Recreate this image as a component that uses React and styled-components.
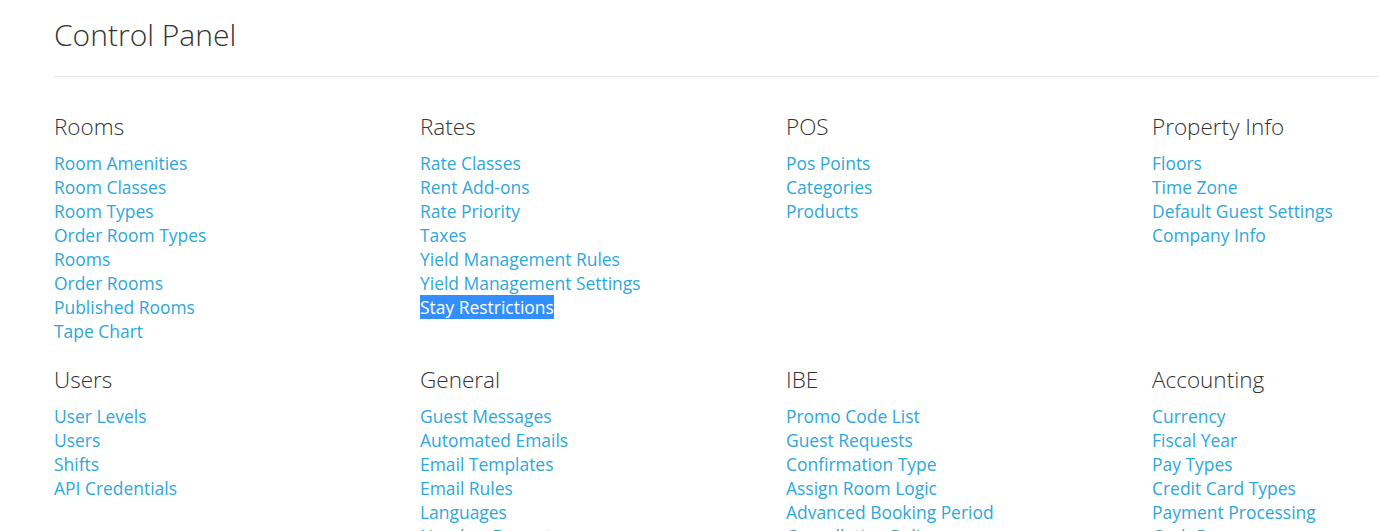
import React from 'react';
import styled, { createGlobalStyle } from 'styled-components';

const GlobalStyle = createGlobalStyle`
  html, body {
    margin: 0;
    padding: 0;
    background: #fff;
    overflow: hidden;
  }
  body {
    font-family: "Open Sans", "Noto Sans", sans-serif;
  }
`;

const Page = styled.div`
  padding: 17px 0 0 54px;
  width: 1325px;
  overflow: hidden;
`;

const Title = styled.h1`
  margin: 0;
  font-size: 30px;
  line-height: 36px;
  font-weight: 300;
  color: #333;
`;

const Rule = styled.hr`
  margin: 23px 0 0;
  border: 0;
  border-top: 1px solid #e8e8e8;
`;

const Grid = styled.div`
  display: grid;
  grid-template-columns: repeat(4, 366px);
  row-gap: 22px;
  padding-top: 35px;
`;

const Section = styled.section`
  display: flex;
  flex-direction: column;
`;

const Heading = styled.h3`
  margin: 0 0 9px;
  font-size: 22.5px;
  line-height: 30px;
  font-weight: 300;
  color: #333;
`;

const LinkList = styled.ul`
  list-style: none;
  margin: 0;
  padding: 0;
`;

const Item = styled.li`
  font-size: 17.45px;
  line-height: 24px;
  white-space: nowrap;
`;

const Link = styled.a`
  color: ${p => (p.$selected ? '#fff' : '#2ea7db')};
  background: ${p => (p.$selected ? '#338fff' : 'transparent')};
  text-decoration: none;
`;

const sections = [
  { title: 'Rooms', links: ['Room Amenities', 'Room Classes', 'Room Types', 'Order Room Types', 'Rooms', 'Order Rooms', 'Published Rooms', 'Tape Chart'] },
  { title: 'Rates', links: ['Rate Classes', 'Rent Add-ons', 'Rate Priority', 'Taxes', 'Yield Management Rules', 'Yield Management Settings', 'Stay Restrictions'], selected: 'Stay Restrictions' },
  { title: 'POS', links: ['Pos Points', 'Categories', 'Products'] },
  { title: 'Property Info', links: ['Floors', 'Time Zone', 'Default Guest Settings', 'Company Info'] },
  { title: 'Users', links: ['User Levels', 'Users', 'Shifts', 'API Credentials'] },
  { title: 'General', links: ['Guest Messages', 'Automated Emails', 'Email Templates', 'Email Rules', 'Languages', 'Number Formats'] },
  { title: 'IBE', links: ['Promo Code List', 'Guest Requests', 'Confirmation Type', 'Assign Room Logic', 'Advanced Booking Period', 'Cancellation Policy'] },
  { title: 'Accounting', links: ['Currency', 'Fiscal Year', 'Pay Types', 'Credit Card Types', 'Payment Processing', 'Cash Drawers'] },
];

export default function App() {
  return (
    <>
      <GlobalStyle />
      <Page>
        <Title>Control Panel</Title>
        <Rule />
        <Grid>
          {sections.map(s => (
            <Section key={s.title}>
              <Heading>{s.title}</Heading>
              <LinkList>
                {s.links.map(l => (
                  <Item key={l}>
                    <Link href="#" $selected={s.selected === l}>{l}</Link>
                  </Item>
                ))}
              </LinkList>
            </Section>
          ))}
        </Grid>
      </Page>
    </>
  );
}
